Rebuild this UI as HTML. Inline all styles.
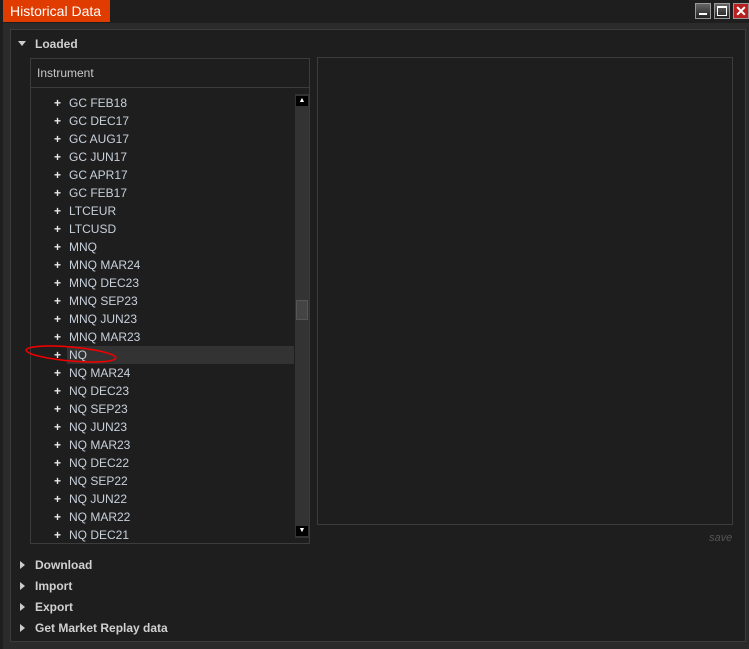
<!DOCTYPE html>
<html><head><style>
*{margin:0;padding:0;box-sizing:border-box}
body{width:749px;height:649px;background:#2b2b2b;font-family:"Liberation Sans",sans-serif;position:relative;overflow:hidden}
.a{position:absolute}
.row{position:absolute;left:0;height:18px;font-size:12px;color:#c9d1dc;line-height:18px}
.row .p{position:absolute;left:23px;top:0;color:#e8e8e8;font-weight:bold;font-size:12px}
.row .t{position:absolute;left:38px;top:0}
.sec{position:absolute;left:20px;font-size:12px;font-weight:bold;color:#d0d0d0}
.tri{display:inline-block;width:0;height:0;border-top:4px solid transparent;border-bottom:4px solid transparent;border-left:5px solid #ccc;margin-right:10px;vertical-align:0}
</style></head><body>
<div class="a" style="left:0;top:0;width:749px;height:23px;background:#1e1e1e"></div>
<div class="a" style="left:0;top:0;width:3px;height:649px;background:#1e1e1e"></div>
<div class="a" style="left:3px;top:0;width:107px;height:22px;background:#e03c00;color:#fff;font-size:14px;line-height:22px;padding-left:7px">Historical Data</div>
<div class="a" style="left:695px;top:3px;width:16px;height:16px;border:1px solid #999;background:linear-gradient(#666,#222)"><div class="a" style="left:3px;top:9px;width:8px;height:2px;background:#fff"></div></div>
<div class="a" style="left:714px;top:3px;width:16px;height:16px;border:1px solid #999;background:linear-gradient(#666,#222)"><div class="a" style="left:2px;top:2px;width:10px;height:10px;border:1px solid #fff;border-top-width:2px"></div></div>
<div class="a" style="left:733px;top:3px;width:16px;height:16px;border:1px solid #999;background:#b82020;color:#fff;font-weight:bold;font-size:14px;line-height:14px;text-align:center">✕</div>
<div class="a" style="left:10px;top:29px;width:736px;height:613px;background:#1e1e1e;border:1px solid #3c3c3c"></div>
<div class="sec" style="top:37px;left:18px"><span class="tri" style="border-left:4px solid transparent;border-right:4px solid transparent;border-top:5px solid #ccc;border-bottom:0;margin-right:9px;vertical-align:2px"></span>Loaded</div>
<div class="a" style="left:30px;top:58px;width:280px;height:486px;border:1px solid #3c3c3c;overflow:hidden">
 <div class="a" style="left:0;top:0;width:278px;height:29px;border-bottom:1px solid #3c3c3c;color:#c8c8c8;font-size:12px;line-height:29px;padding-left:6px">Instrument</div>
 <div class="a" style="left:36px;top:287px;width:227px;height:18px;background:#333"></div>
 <div class="a" style="left:0;top:35px;width:262px;height:450px" id="l"></div>
 <div class="a" style="left:264px;top:35px;width:14px;height:444px;background:#333"></div>
 <div class="a" style="left:265px;top:37px;width:12px;height:10px;background:#000;color:#fff;font-size:7px;text-align:center;line-height:10px">▲</div>
 <div class="a" style="left:265px;top:467px;width:12px;height:10px;background:#000;color:#fff;font-size:7px;text-align:center;line-height:10px">▼</div>
 <div class="a" style="left:265px;top:241px;width:12px;height:20px;background:#444;border:1px solid #555"></div>
</div>
<div class="a" style="left:317px;top:57px;width:416px;height:468px;border:1px solid #3c3c3c"></div>
<div class="a" style="left:709px;top:532px;font-size:11px;font-style:italic;color:#555">save</div>
<div class="sec" style="top:558px"><span class="tri"></span>Download</div>
<div class="sec" style="top:579px"><span class="tri"></span>Import</div>
<div class="sec" style="top:600px"><span class="tri"></span>Export</div>
<div class="sec" style="top:621px"><span class="tri"></span>Get Market Replay data</div>
<svg class="a" style="left:24px;top:342px" width="100" height="26"><ellipse cx="47" cy="12" rx="45" ry="7" transform="rotate(5 47 12)" fill="none" stroke="#e00" stroke-width="1.6"/></svg>
<script>
var n=["GC FEB18","GC DEC17","GC AUG17","GC JUN17","GC APR17","GC FEB17","LTCEUR","LTCUSD","MNQ","MNQ MAR24","MNQ DEC23","MNQ SEP23","MNQ JUN23","MNQ MAR23","NQ","NQ MAR24","NQ DEC23","NQ SEP23","NQ JUN23","NQ MAR23","NQ DEC22","NQ SEP22","NQ JUN22","NQ MAR22","NQ DEC21"];
var h="";n.forEach(function(s,i){h+='<div class="row" style="top:'+(i*18)+'px;width:262px"><span class="p">+</span><span class="t">'+s+'</span></div>'});
document.getElementById("l").innerHTML=h;
</script>
</body></html>
